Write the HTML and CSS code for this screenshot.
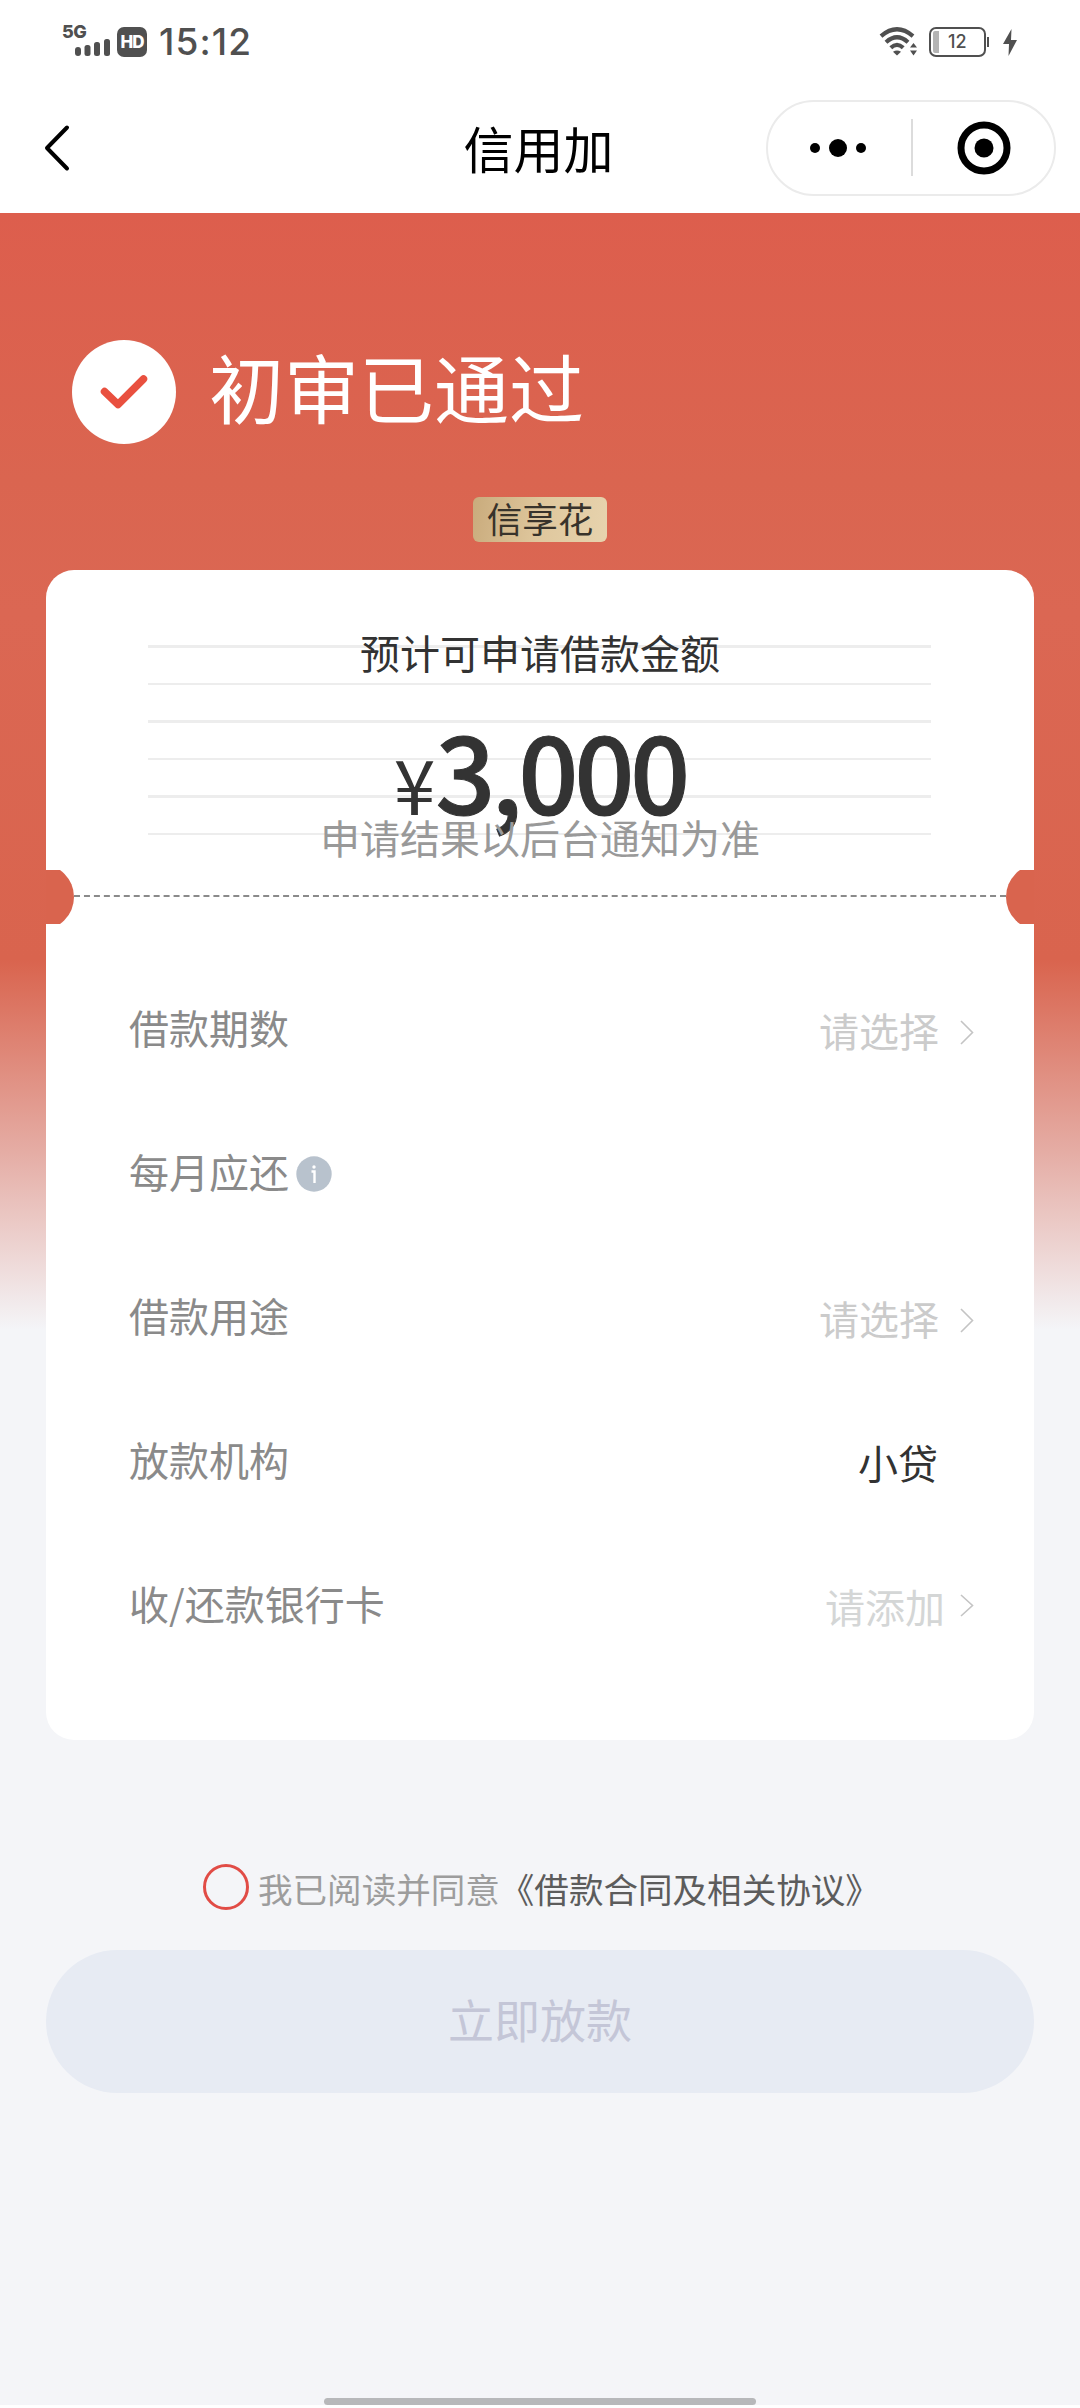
FILE: index.html
```html
<!DOCTYPE html>
<html lang="zh-CN">
<head>
<meta charset="utf-8">
<title>信用加</title>
<link rel="stylesheet" href="styles.css">
</head>
<body>
<div class="page">
  <header class="status">
    <div class="status-left">
      <div class="signal">
        <span class="net">5G</span>
        <svg class="bars" width="36" height="17" viewBox="0 0 36 17" fill="#505050"><rect x="0" y="8" width="6" height="9" rx="3"/><rect x="9.500" y="6" width="6" height="11" rx="2.500"/><rect x="19" y="3" width="6" height="14" rx="2.500"/><rect x="29" y="0" width="6" height="17" rx="2.500"/></svg>
      </div>
      <span class="hd">HD</span>
      <span class="clock">15:12</span>
    </div>
    <div class="status-right">
      <svg width="39" height="30" viewBox="0 0 39 30" fill="none" stroke="#505050" stroke-width="4.200"><path d="M2 9.200Q18 -4.600 34 9.200"/><path d="M7 15.200Q18 5.400 29 15.200"/><path d="M11.800 20.700Q18 15 24.200 20.700"/><path d="M14 24.800Q18 22 22 24.800L18 28.500Z" fill="#505050" stroke="none"/><path d="M31 20.500L34.500 16L38 20.500ZM31 23.500H38L34.500 28.500Z" fill="#505050" stroke="none"/></svg>
      <div class="battery"><span class="level"></span><span class="percent">12</span></div>
      <svg class="bolt" width="14" height="27" viewBox="0 0 14 27" fill="#505050"><path d="M8.500 0L0 15H6L5.500 27L14 11H8Z"/></svg>
    </div>
  </header>
  <nav class="nav">
    <svg class="back" width="26" height="48" viewBox="0 0 26 48" fill="none" stroke="#000" stroke-width="4" stroke-linecap="round" stroke-linejoin="round"><path d="M23 3.500L3 24L23 44.500"/></svg>
    <h1 class="title">信用加</h1>
    <div class="capsule">
      <svg width="56" height="18" viewBox="0 0 56 18"><circle cx="5" cy="9" r="5"/><circle cx="28" cy="9" r="9"/><circle cx="51" cy="9" r="5"/></svg>
      <span class="split"></span>
      <svg width="54" height="54" viewBox="0 0 54 54"><circle cx="27" cy="27" r="23" fill="none" stroke="#000" stroke-width="7"/><circle cx="27" cy="27" r="9.500"/></svg>
    </div>
  </nav>
  <main class="main">
    <section class="result">
      <svg width="104" height="104" viewBox="0 0 104 104"><circle cx="52" cy="52" r="52" fill="#fff"/><path d="M32.500 51.500L46 64.500L71.500 39" fill="none" stroke="#e9503f" stroke-width="7.500" stroke-linecap="round" stroke-linejoin="round"/></svg>
      <h2 class="result-text">初审已通过</h2>
    </section>
    <div class="badge">信享花</div>
    <section class="card">
      <div class="quota">
        <p class="quota-label">预计可申请借款金额</p>
        <p class="amount"><span class="yen">¥</span><span class="figure">3,000</span></p>
        <p class="quota-note">申请结果以后台通知为准</p>
      </div>
      <div class="tear">
        <div class="notch"></div>
        <div class="dash"></div>
        <div class="notch notch-right"></div>
      </div>
      <div class="rows">
        <div class="row"><span class="label">借款期数</span><span class="value">请选择<svg class="arrow" width="14" height="25" viewBox="0 0 14 25"><path d="M1 1L12.500 12.500L1 24"/></svg></span></div>
        <div class="row"><span class="label">每月应还</span><svg class="info" width="36" height="36" viewBox="0 0 36 36"><circle cx="18" cy="18" r="17.700" fill="#b8c2cd"/><path d="M15.500 15.500H18.500V27" fill="none" stroke="#fff" stroke-width="2.400"/><circle cx="18" cy="11" r="1.700" fill="#fff"/></svg></div>
        <div class="row"><span class="label">借款用途</span><span class="value">请选择<svg class="arrow" width="14" height="25" viewBox="0 0 14 25"><path d="M1 1L12.500 12.500L1 24"/></svg></span></div>
        <div class="row"><span class="label">放款机构</span><span class="value value-set">小贷</span></div>
        <div class="row"><span class="label">收/还款银行卡</span><span class="value value-add">请添加<svg class="arrow" width="14" height="23" viewBox="0 0 14 23"><path d="M1 1L12.500 11.500L1 22"/></svg></span></div>
      </div>
    </section>
    <div class="agree"><span class="radio"></span><span class="agree-text">我已阅读并同意<a class="terms">《借款合同及相关协议》</a></span></div>
    <button class="submit">立即放款</button>
    <div class="home-bar"></div>
  </main>
</div>
</body>
</html>
```

FILE: styles.css
```css
* { box-sizing: border-box; margin: 0; padding: 0; }

body {
  font-family: "Noto Sans CJK SC", sans-serif;
  background: #fff;
}

svg { display: block; flex: none; }

.page {
  width: 1080px;
  height: 2408px;
  padding-bottom: 3px;
  display: flex;
  flex-direction: column;
  overflow: hidden;
}

/* Status bar */
.status {
  height: 84px;
  padding: 0 63px 0 62px;
  display: flex;
  justify-content: space-between;
  align-items: center;
  background: #fff;
  color: #505050;
  font-family: Inter, sans-serif;
}
.status-left, .status-right { display: flex; align-items: center; }
.signal {
  width: 48px;
  height: 32px;
  margin-top: -4px;
  display: flex;
  flex-direction: column;
  justify-content: space-between;
}
.net { font: 800 18px/16px Inter, sans-serif; letter-spacing: -0.5px; }
.bars { margin-left: 12.500px; margin-top: -1px; }
.hd {
  width: 30px;
  height: 30px;
  margin-left: 7px;
  border-radius: 7px;
  background: #505050;
  color: #fff;
  font: 800 17px/30px Inter, sans-serif;
  letter-spacing: -1px;
  text-align: center;
}
.clock { margin-left: 12px; font-size: 37px; font-weight: 500; line-height: 44px; letter-spacing: 1.100px; }
.battery {
  position: relative;
  width: 57px;
  height: 30px;
  margin-left: 11px;
  padding: 2px;
  border: 2.500px solid #505050;
  border-radius: 7px;
  display: flex;
  align-items: center;
}
.battery::after {
  content: "";
  position: absolute;
  right: -5px;
  top: 8px;
  width: 2px;
  height: 10px;
  background: #505050;
}
.level { width: 6px; height: 22px; border-radius: 2px 0 0 2px; background: #b4b4b4; }
.percent { margin-left: 9px; font-size: 18px; line-height: 22px; font-weight: 500; }
.bolt { margin-left: 17px; }

/* Navigation */
.nav {
  height: 129px;
  padding: 0 24px 2px 44px;
  display: grid;
  grid-template-columns: 290px 1fr 290px;
  align-items: center;
  background: #fff;
}
.title {
  font-size: 50px;
  line-height: 72px;
  font-weight: 400;
  text-align: center;
  margin: -1px 0 0 -23px;
}
.capsule {
  width: 290px;
  height: 96px;
  padding: 0 43px 0 42px;
  border: 2px solid #ebebeb;
  border-radius: 48px;
  display: flex;
  align-items: center;
  justify-content: space-between;
}
.split { width: 2px; height: 57px; background: #dcdcdc; }

/* Page body */
.main {
  flex: 1;
  padding: 0 46px;
  display: flex;
  flex-direction: column;
  background: linear-gradient(#dd5e4d 0, #da6550 267px, #db6753 400px, #d9644e 747px, #e5ada5 940px, #f4f5f8 1117px);
}
.result {
  height: 104px;
  margin: 127px 0 0 26px;
  display: flex;
  align-items: center;
  color: #fff;
}
.result-text { margin-left: 33px; font-size: 75px; line-height: 100px; font-weight: 400; margin-top: -12px; }
.badge {
  width: 134px;
  height: 45px;
  margin: 53px auto 28px;
  border-radius: 6px;
  background: linear-gradient(100deg, #c9ab7c, #dfc79d 50%, #e7d3ae);
  color: #38332b;
  font-size: 35.500px;
  line-height: 42px;
  text-align: center;
}
.card {
  height: 1170px;
  border-radius: 28px;
  background: #fff;
}
.quota {
  height: 300px;
  padding-top: 56px;
  text-align: center;
  background: repeating-linear-gradient(#ededed 0, #ededed 2.500px, transparent 2.500px, transparent 37.600px) 102px 75px / 783px 191px no-repeat;
}
.quota-label { font-size: 40px; line-height: 52px; color: #323232; }
.amount {
  height: 116px;
  line-height: 116px;
  margin-top: 33px;
  color: #333;
  white-space: nowrap;
}
.yen { font-size: 75px; }
.figure { font-size: 105px; font-weight: 500; letter-spacing: -4px; -webkit-text-stroke: 1px #333; }
.quota-note {
  position: relative;
  margin-top: -16px;
  font-size: 40px;
  line-height: 52px;
  color: #999;
}
.tear { height: 54px; display: flex; align-items: center; }
.notch { width: 28px; height: 54px; overflow: hidden; }
.notch::before {
  content: "";
  display: block;
  width: 66px;
  height: 66px;
  margin: -6px 0 0 -38px;
  border-radius: 50%;
  background: #d9644e;
}
.notch-right::before { margin-left: 0; }
.dash { flex: 1; margin-top: -2px; border-top: 2px dashed #8a8a8a; }

/* Form rows */
.rows { padding: 31px 60px 0 83px; }
.row { height: 144px; display: flex; align-items: center; font-size: 40px; line-height: 60px; }
.label { color: #8a8a8a; }
.info { margin: 5px 0 0 7px; }
.value {
  margin-left: auto;
  padding-top: 5px;
  display: flex;
  align-items: center;
  color: #cbcbcb;
}
.value-set { color: #323232; padding-right: 36px; }
.value-add { color: #d4d6d6; }
.arrow { margin: 5px 0 0 21px; fill: none; stroke: #c4c4c4; stroke-width: 1.600; }
.value-add .arrow { margin: -1px 0 0 15px; }

/* Agreement and action */
.agree {
  height: 46px;
  margin: 124px 0 40px 157px;
  display: flex;
  align-items: center;
  gap: 9px;
  font-size: 34.560px;
  line-height: 46px;
  color: #9d9d9d;
  white-space: nowrap;
}
.agree-text { padding-top: 2px; }
.radio { width: 46px; height: 46px; border: 3px solid #e14c46; border-radius: 50%; }
.terms { color: #5c5c5c; }
.submit {
  height: 143px;
  padding-bottom: 6px;
  border: 0;
  border-radius: 72px;
  background: #e7ebf3;
  color: #c4c6d7;
  font: 400 46px/137px "Noto Sans CJK SC", sans-serif;
}
.home-bar {
  width: 432px;
  height: 7px;
  margin: auto auto 0;
  border-radius: 4px;
  background: #b7b8ba;
}
```
